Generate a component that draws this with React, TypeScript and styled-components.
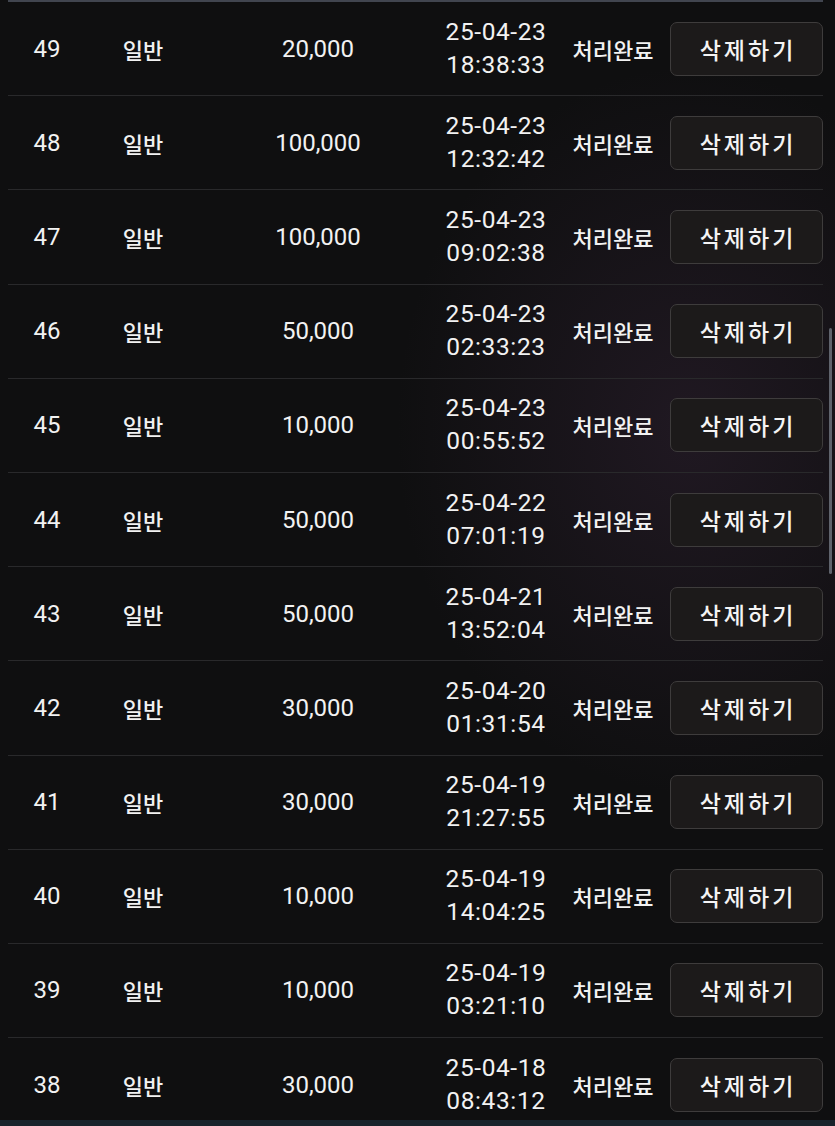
import styled, { createGlobalStyle } from "styled-components";

const GlobalStyle = createGlobalStyle`
  html, body {
    margin: 0;
    padding: 0;
    background: #0f0f10;
  }
  body {
    font-family: "Roboto", "Noto Sans CJK KR", sans-serif;
    color: #f2f2f2;
  }
`;

type Deposit = {
  id: number;
  kind: string;
  amount: string;
  date: string;
  time: string;
};

const deposits: Deposit[] = [
  { id: 49, kind: "일반", amount: "20,000", date: "25-04-23", time: "18:38:33" },
  { id: 48, kind: "일반", amount: "100,000", date: "25-04-23", time: "12:32:42" },
  { id: 47, kind: "일반", amount: "100,000", date: "25-04-23", time: "09:02:38" },
  { id: 46, kind: "일반", amount: "50,000", date: "25-04-23", time: "02:33:23" },
  { id: 45, kind: "일반", amount: "10,000", date: "25-04-23", time: "00:55:52" },
  { id: 44, kind: "일반", amount: "50,000", date: "25-04-22", time: "07:01:19" },
  { id: 43, kind: "일반", amount: "50,000", date: "25-04-21", time: "13:52:04" },
  { id: 42, kind: "일반", amount: "30,000", date: "25-04-20", time: "01:31:54" },
  { id: 41, kind: "일반", amount: "30,000", date: "25-04-19", time: "21:27:55" },
  { id: 40, kind: "일반", amount: "10,000", date: "25-04-19", time: "14:04:25" },
  { id: 39, kind: "일반", amount: "10,000", date: "25-04-19", time: "03:21:10" },
  { id: 38, kind: "일반", amount: "30,000", date: "25-04-18", time: "08:43:12" },
];

const Screen = styled.div`
  height: 1126px;
  display: flex;
  flex-direction: column;
  overflow: hidden;
  background:
    radial-gradient(ellipse 420px 520px at 690px 430px, rgba(68, 44, 72, 0.32), transparent 70%),
    #0f0f10;
`;

const Body = styled.div`
  flex: 1;
  min-height: 0;
  display: flex;
  overflow: hidden;
`;

const List = styled.div`
  margin-left: 8px;
  width: 815px;
  border-top: 2px solid #41454f;
`;

const Row = styled.div`
  display: grid;
  grid-template-columns: 78px 114px 236px 120px 114px 153px;
  align-items: center;
  height: 93.2px;
  border-bottom: 1px solid #29292b;
`;

const Num = styled.div`
  text-align: center;
  font-size: 24px;
`;

const Label = styled.div`
  text-align: center;
  font-family: "Noto Sans CJK KR", sans-serif;
  font-size: 22px;
  font-weight: 500;
`;

const DateCell = styled.div`
  text-align: center;
  font-size: 24.5px;
  line-height: 33px;
  letter-spacing: 0.6px;
  margin-top: -2px;
`;

const DeleteButton = styled.button`
  height: 54px;
  margin: 0;
  border: 1.5px solid #3e3c3c;
  border-radius: 7px;
  background: #1c1a1a;
  color: #f4f4f4;
  font-family: "Noto Sans CJK KR", sans-serif;
  font-size: 23px;
  font-weight: 500;
  letter-spacing: 3px;
  padding: 0 0 0 3px;
  cursor: pointer;
`;

const ScrollTrack = styled.div`
  flex: 1;
  padding: 328px 1px 0 6px;
`;

const ScrollThumb = styled.div`
  width: 3px;
  height: 246px;
  background: #5f636c;
  border-radius: 2px;
`;

const FooterStrip = styled.div`
  height: 6px;
  background: #18222a;
`;

const DepositRow = ({ deposit }: { deposit: Deposit }) => {
  const { id, kind, amount, date, time } = deposit;
  return (
    <Row role="row">
      <Num>{id}</Num>
      <Label>{kind}</Label>
      <Num>{amount}</Num>
      <DateCell>
        {date}
        <br />
        {time}
      </DateCell>
      <Label>처리완료</Label>
      <DeleteButton>삭제하기</DeleteButton>
    </Row>
  );
};

export default function App() {
  return (
    <>
      <GlobalStyle />
      <Screen>
        <Body>
          <List>
            {deposits.map((d) => (
              <DepositRow key={d.id} deposit={d} />
            ))}
          </List>
          <ScrollTrack>
            <ScrollThumb />
          </ScrollTrack>
        </Body>
        <FooterStrip />
      </Screen>
    </>
  );
}
